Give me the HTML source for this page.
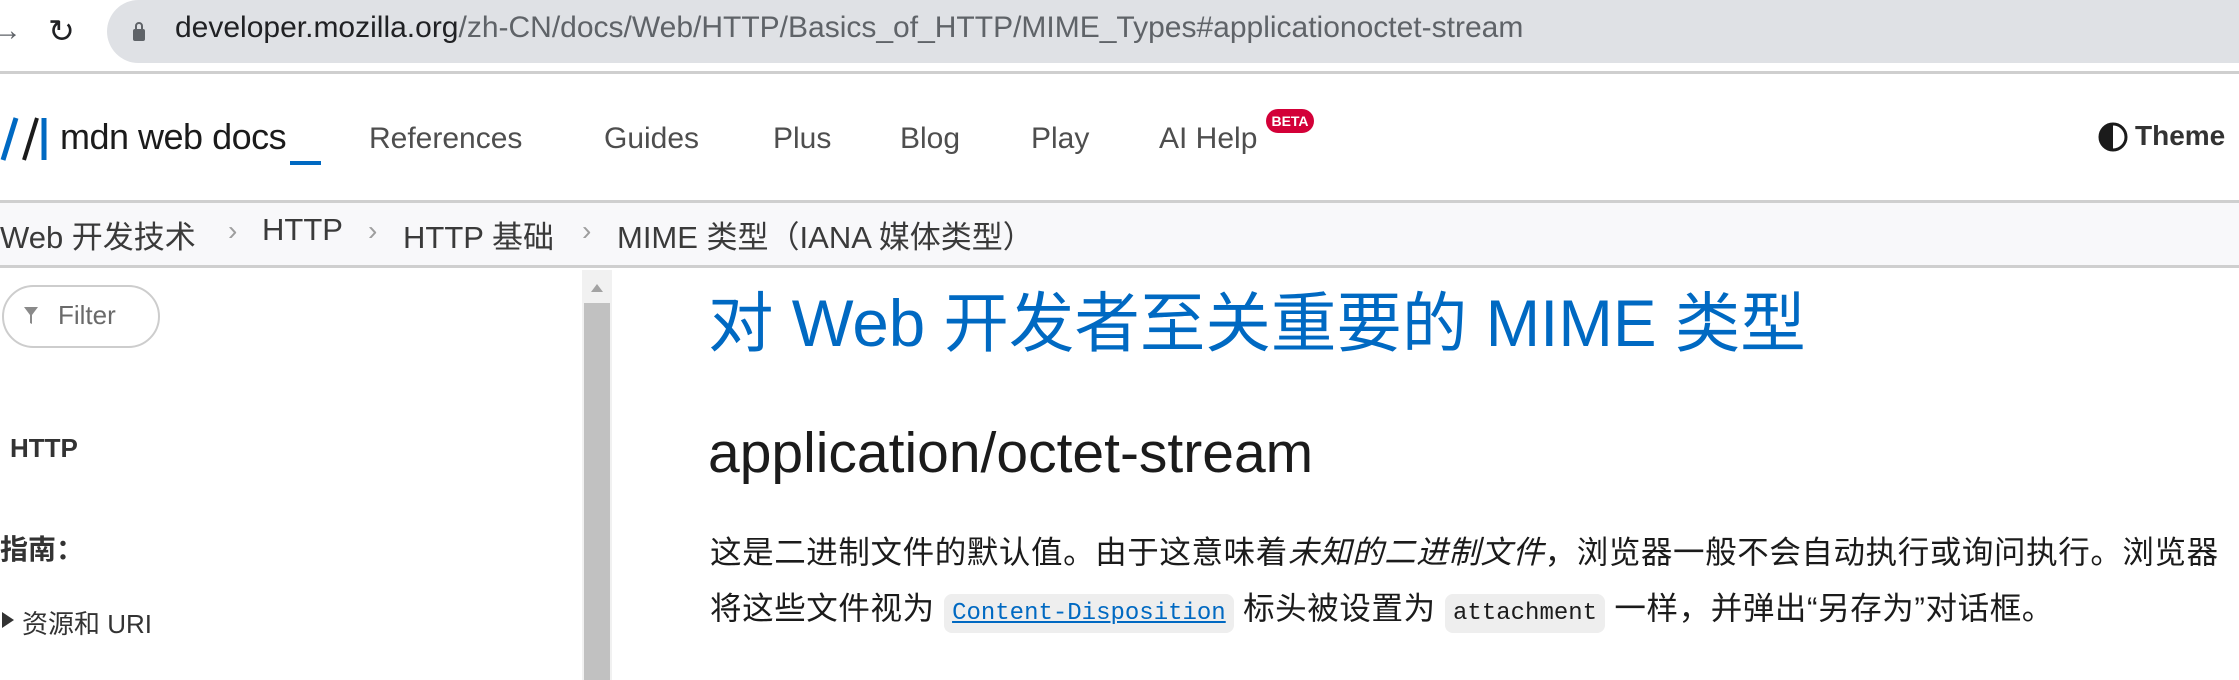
<!DOCTYPE html>
<html><head><meta charset="utf-8"><style>
*{margin:0;padding:0;box-sizing:border-box}
body{width:2239px;height:680px;overflow:hidden;background:#fff;font-family:"Liberation Sans","Noto Sans CJK SC",sans-serif;position:relative;color:#1b1b1b}
.a{position:absolute;white-space:nowrap}
.bar{left:107px;top:0;width:2200px;height:63px;background:#dfe1e5;border-radius:32px}
.url{left:175px;top:11px;font-size:30px;color:#202124}
.url span{color:#5f6368}
.line{left:0;width:2239px;height:3px;background:#cfcfcf}
.nav{font-size:30px;color:#4e4e4e;top:122px}
.bc{top:212px;font-size:31px;color:#3a3a3a}
.sep{color:#9e9e9e;font-size:28px;top:215px}
.p{left:710px;font-size:31.5px;letter-spacing:0.6px;color:#1b1b1b}
code{font-family:"Liberation Mono",monospace;font-size:24px;background:#eee;border-radius:8px;padding:6px 8px;letter-spacing:0}
</style></head><body>
<div class="a" style="left:-8px;top:14px;font-size:30px;color:#5f6368">→</div>
<div class="a" style="left:48px;top:12px;font-size:32px;color:#202124">↻</div>
<div class="a bar"></div>
<svg class="a" style="left:132px;top:20px" width="14" height="22"><rect x="1" y="9" width="12" height="12" rx="2" fill="#5f6368"/><path d="M4 9V6a3 3 0 0 1 6 0v3" stroke="#5f6368" stroke-width="2" fill="none"/></svg>
<div class="a url">developer.mozilla.org<span>/zh-CN/docs/Web/HTTP/Basics_of_HTTP/MIME_Types#applicationoctet-stream</span></div>
<div class="a line" style="top:71px"></div>
<svg class="a" style="left:0;top:116px" width="54" height="46"><path d="M3 44L16 2M44 2V44" stroke="#0069c2" stroke-width="5" fill="none"/><path d="M24 44L37 2" stroke="#1b1b1b" stroke-width="4" fill="none"/></svg>
<div class="a" style="left:60px;top:116px;font-size:36px;color:#1b1b1b;letter-spacing:-0.5px">mdn web docs</div>
<div class="a" style="left:290px;top:161px;width:31px;height:4px;background:#0069c2"></div>
<div class="a nav" style="left:369px">References</div>
<div class="a nav" style="left:604px">Guides</div>
<div class="a nav" style="left:773px">Plus</div>
<div class="a nav" style="left:900px">Blog</div>
<div class="a nav" style="left:1031px">Play</div>
<div class="a nav" style="left:1159px">AI Help</div>
<div class="a" style="left:1266px;top:109px;width:48px;height:24px;background:#d30038;border-radius:12px;color:#fff;font-size:14px;font-weight:bold;text-align:center;line-height:24px">BETA</div>
<svg class="a" style="left:2097px;top:121px" width="32" height="32"><circle cx="16" cy="16" r="13" stroke="#1b1b1b" stroke-width="3" fill="none"/><path d="M16 3A13 13 0 0 0 16 29Z" fill="#1b1b1b"/></svg>
<div class="a" style="left:2135px;top:120px;font-size:28px;font-weight:bold;color:#333">Theme</div>
<div class="a line" style="top:200px"></div>
<div class="a" style="left:0;top:203px;width:2239px;height:62px;background:#f8f8fa"></div>
<div class="a bc" style="left:0">Web 开发技术</div>
<div class="a bc sep" style="left:228px">›</div>
<div class="a bc" style="left:262px">HTTP</div>
<div class="a bc sep" style="left:368px">›</div>
<div class="a bc" style="left:403px">HTTP 基础</div>
<div class="a bc sep" style="left:582px">›</div>
<div class="a bc" style="left:617px">MIME 类型（IANA 媒体类型）</div>
<div class="a line" style="top:265px"></div>
<div class="a" style="left:2px;top:285px;width:158px;height:63px;border:2px solid #cdcdcd;border-radius:32px"></div>
<svg class="a" style="left:23px;top:305px" width="16" height="20"><path d="M1 2H15L9 10V19L7 18V10Z" fill="#8a8a8a"/></svg>
<div class="a" style="left:58px;top:300px;font-size:26px;color:#6a6a6a">Filter</div>
<div class="a" style="left:582px;top:270px;width:30px;height:410px;background:#f1f1f1"></div>
<div class="a" style="left:584px;top:303px;width:26px;height:377px;background:#c1c1c1"></div>
<svg class="a" style="left:589px;top:282px" width="16" height="12"><path d="M8 2L14 10H2Z" fill="#a3a3a3"/></svg>
<div class="a" style="left:10px;top:433px;font-size:26px;font-weight:bold;color:#333">HTTP</div>
<div class="a" style="left:0;top:528px;font-size:28px;font-weight:bold;color:#333">指南：</div>
<svg class="a" style="left:1px;top:610px" width="14" height="20"><path d="M1 2L13 10L1 18Z" fill="#333"/></svg>
<div class="a" style="left:22px;top:604px;font-size:26px;color:#333">资源和 URI</div>
<div class="a" style="left:708px;top:270px;font-size:65.5px;color:#0069c2">对 Web 开发者至关重要的 MIME 类型</div>
<div class="a" style="left:708px;top:420px;font-size:57px;font-weight:300;color:#1b1b1b">application/octet-stream</div>
<div class="a p" style="top:527px">这是二进制文件的默认值。由于这意味着<i>未知的二进制文件</i>，浏览器一般不会自动执行或询问执行。浏览器</div>
<div class="a p" style="top:583px">将这些文件视为 <code style="color:#0069c2;text-decoration:underline">Content-Disposition</code> 标头被设置为 <code>attachment</code> 一样，并弹出“另存为”对话框。</div>
</body></html>
